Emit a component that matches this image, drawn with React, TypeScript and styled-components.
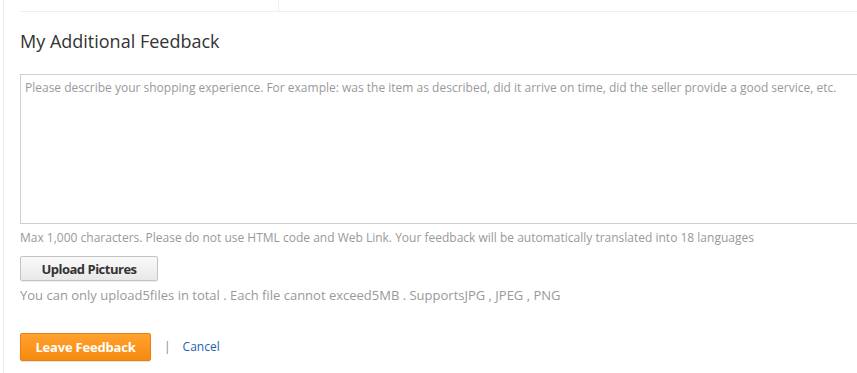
import React from "react";
import styled, { createGlobalStyle } from "styled-components";

const GlobalStyle = createGlobalStyle`
  html, body {
    margin: 0;
    padding: 0;
    background: #fff;
    overflow: hidden;
  }
  body {
    font-family: "Open Sans", "Liberation Sans", Arial, sans-serif;
    color: #333;
  }
`;

const Page = styled.div`
  width: 857px;
  height: 373px;
  padding-left: 3px;
  box-sizing: border-box;
  overflow: hidden;
`;

const Panel = styled.div`
  height: 100%;
  border-left: 1px solid #ececec;
  padding-left: 16px;
`;

const TabStrip = styled.div`
  display: flex;
  height: 11px;
  border-bottom: 1px solid #efefef;
`;

const TabCell = styled.div<{ $w: number }>`
  width: ${(p) => p.$w}px;
  border-right: 1px solid #efefef;
`;

const Heading = styled.h2`
  margin: 18px 0 0;
  font-size: 18px;
  font-weight: 400;
  line-height: 22px;
  color: #333;
`;

const Field = styled.textarea`
  display: block;
  margin-top: 22px;
  width: 860px;
  height: 150px;
  box-sizing: border-box;
  border: 1px solid #cfcfcf;
  padding: 5px 4px;
  font-family: "Open Sans", "Liberation Sans", Arial, sans-serif;
  font-size: 12px;
  line-height: 16px;
  resize: none;
  outline: none;
  &::placeholder {
    color: #999;
  }
`;

const Note = styled.p<{ $size?: number; $top?: number }>`
  margin: ${(p) => p.$top ?? 0}px 0 0;
  font-size: ${(p) => p.$size ?? 12}px;
  line-height: 16px;
  color: #999;
`;

const UploadButton = styled.button`
  display: block;
  margin: 10px 0 6px;
  width: 138px;
  height: 25px;
  border: 1px solid #c4c4c4;
  border-radius: 2px;
  background: linear-gradient(#fafafa, #e8e8e8);
  font-family: "Open Sans", "Liberation Sans", Arial, sans-serif;
  font-size: 13px;
  font-weight: 700;
  letter-spacing: -0.5px;
  color: #333;
  padding: 0;
  box-shadow: 0 1px 1px rgba(0, 0, 0, 0.08);
`;

const Actions = styled.div`
  display: flex;
  align-items: center;
  margin-top: 30px;
`;

const SubmitButton = styled.button`
  width: 131px;
  height: 28px;
  border: 1px solid #e97f0c;
  border-radius: 2px;
  background: linear-gradient(#ffa22f, #f7890f);
  color: #fff;
  font-family: "Open Sans", "Liberation Sans", Arial, sans-serif;
  font-size: 13px;
  font-weight: 700;
  letter-spacing: -0.2px;
  padding: 0;
  box-shadow: 0 1px 1px rgba(0, 0, 0, 0.12);
`;

const Divider = styled.span`
  margin: 0 12px 2px 13px;
  color: #888;
  font-size: 12px;
`;

const CancelLink = styled.a`
  margin-bottom: 2px;
  color: #1e62b0;
  font-size: 12px;
  text-decoration: none;
  cursor: pointer;
`;

const App = () => {
  return (
    <Page>
      <GlobalStyle />
      <Panel>
        <TabStrip>
          <TabCell $w={258} />
        </TabStrip>
        <Heading>My Additional Feedback</Heading>
        <Field placeholder="Please describe your shopping experience. For example: was the item as described, did it arrive on time, did the seller provide a good service, etc." />
        <Note $top={6}>
          Max 1,000 characters. Please do not use HTML code and Web Link. Your feedback will be automatically translated into 18 languages
        </Note>
        <UploadButton>Upload Pictures</UploadButton>
        <Note $size={13}>
          You can only upload5files in total . Each file cannot exceed5MB . SupportsJPG , JPEG , PNG
        </Note>
        <Actions>
          <SubmitButton>Leave Feedback</SubmitButton>
          <Divider>|</Divider>
          <CancelLink>Cancel</CancelLink>
        </Actions>
      </Panel>
    </Page>
  );
};

export default App;
